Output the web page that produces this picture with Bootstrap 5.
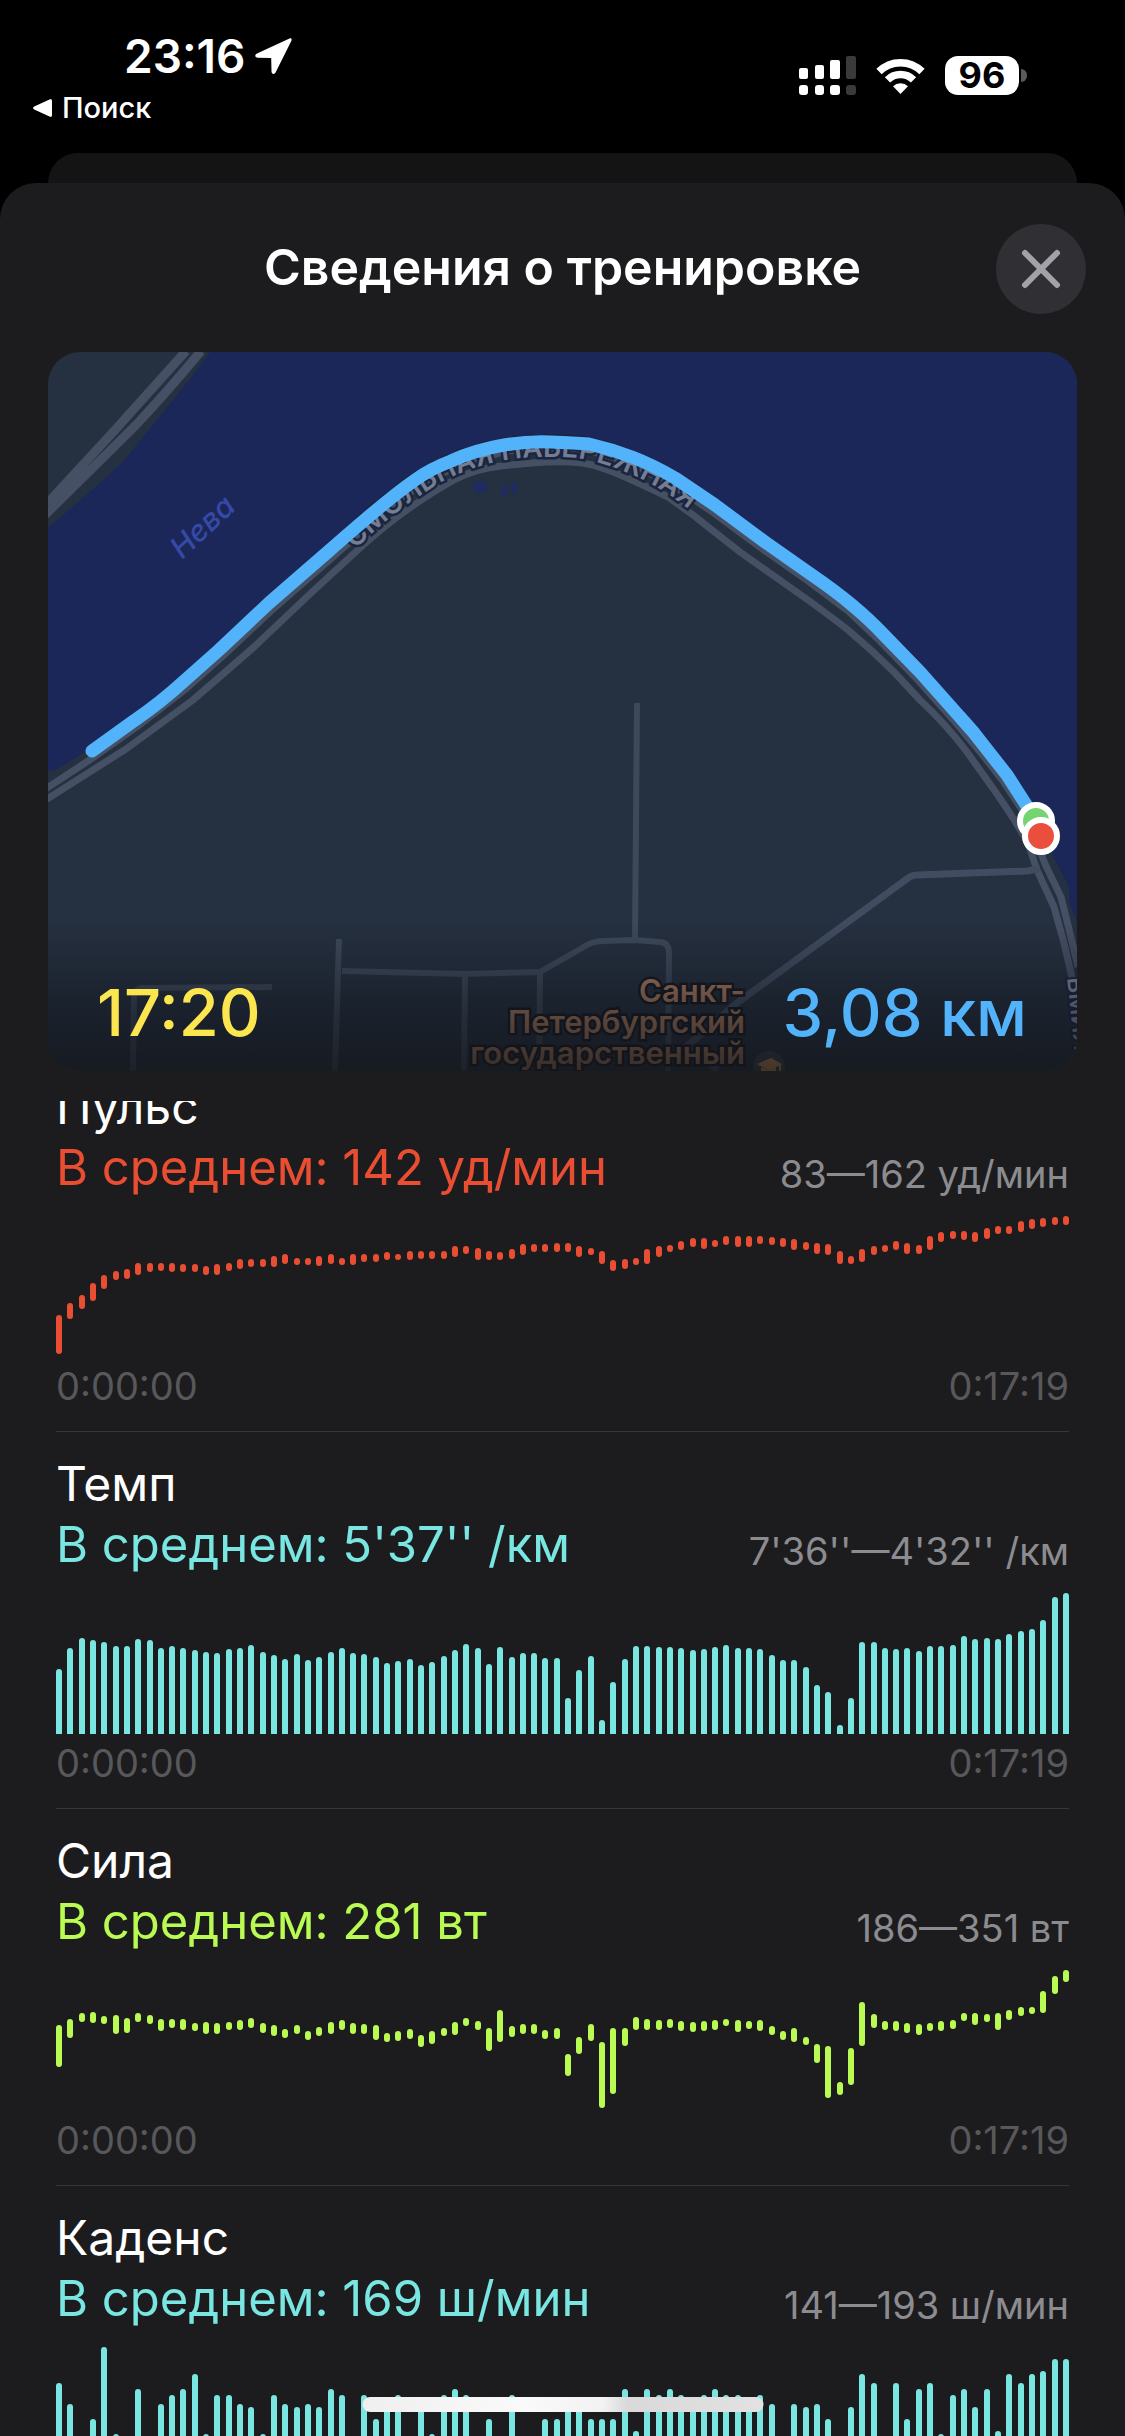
<!DOCTYPE html>
<html lang="ru" data-bs-theme="dark">
<head>
<meta charset="utf-8">
<meta name="viewport" content="width=device-width, initial-scale=1">
<title>Сведения о тренировке</title>
<link href="https://cdn.jsdelivr.net/npm/bootstrap@5.3.0/dist/css/bootstrap.min.css" rel="stylesheet">
<style>
  :root { --sheet: #1c1c1e; --red: #e94e33; --cyan: #79e6e1; --green: #b9fb52; --sky: #52b3fa; --yellow: #fbe650; }
  body { background: #000; color: #fff; font-family: Inter, "Liberation Sans", sans-serif; font-size: 48px; line-height: 60px; }
  .status-left { padding: 28px 0 0 33px; }
  .status-time { font-size: 46px; line-height: 56px; font-weight: 600; padding-left: 91px; gap: 10px; }
  .status-back { font-size: 29px; line-height: 36px; margin-top: 6px; gap: 10px; font-weight: 500; }
  .status-right { padding: 56px 98px 0 0; gap: 20px; height: 95px; }
  .status-area { height: 153px; }
  .battery-level { width: 74px; height: 39px; border-radius: 13px; font-size: 36px; line-height: 39px; font-weight: 700; }
  .battery-nub { width: 6px; height: 13px; border-radius: 0 6px 6px 0; background: #5a5a5a; margin-left: 2px; }
  .sheet-behind { height: 30px; margin: 0 48px; border-radius: 30px 30px 0 0; background: #141414; }
  .sheet { background: var(--sheet); border-radius: 36px 36px 0 0; min-height: 0; }
  .sheet-head { padding: 41px 39px 38px; }
  .head-side { width: 90px; height: 90px; }
  .close-btn { background: #303034; color: #a2a2a8; }
  .sheet-title { font-size: 50px; line-height: 60px; font-weight: 600; padding-bottom: 4px; }
  .map-box { margin: 0 48px 30px; height: 719px; border-radius: 32px; }
  .map-totals { padding: 0 50px 18px 49px; font-size: 65px; line-height: 80px; font-weight: 500; }
  .c-yellow { color: var(--yellow); } .c-sky { color: var(--sky); }
  .metrics { min-height: 0; scrollbar-width: none; }
  .metrics::-webkit-scrollbar { display: none; }
  .metric { margin: 0 56px; padding: 22px 0; border-bottom: 1px solid #37373a; }
  .metric h2 { font-size: 48px; line-height: 60px; font-weight: 400; }
  .m-avg { font-size: 49px; line-height: 61px; }
  .m-range { font-size: 38px; line-height: 48px; color: #8c8c90; }
  .m-plot { height: 141px; margin: 18px 0 6px; }
  .m-plot i { width: 6px; border-radius: 3px; background: currentColor; }
  .m-plot.solid i { border-radius: 3px 3px 0 0; }
  .m-time { font-size: 38px; line-height: 46px; color: #58585b; }
  .t-red { color: var(--red); } .t-cyan { color: var(--cyan); } .t-green { color: var(--green); }
  .home-bar { width: 401px; height: 15px; bottom: 24px; background: linear-gradient(90deg, #efefef, #fafafa 40%, #f2f2f2 60%, #d9d9d9 66%, #e2e2e2); }
</style>
<script src="https://cdn.jsdelivr.net/npm/bootstrap@5.3.0/dist/js/bootstrap.bundle.min.js"></script>
</head>
<body class="vh-100 overflow-hidden d-flex flex-column">

<header class="status-area flex-shrink-0 d-flex justify-content-between">
  <div class="status-left">
    <div class="status-time d-flex align-items-center">23:16
      <svg width="37" height="36" viewBox="0 0 37 36" fill="#fff" aria-hidden="true"><path d="M34.500 .5 2 15.500c-2.500 1.200-2.300 4 .8 4.200l13.400.3.300 13.400c.100 3 3 3.300 4.200.8L36.300 3c.9-2-.2-3.200-1.800-2.500z"/></svg>
    </div>
    <a href="#" class="status-back d-flex align-items-center text-white text-decoration-none">
      <svg width="19" height="18" viewBox="0 0 19 18" fill="#fff" aria-hidden="true"><path d="M1.200 7.600 16.500.4c1.400-.6 2.500 0 2.500 1.400v14.400c0 1.400-1.100 2-2.500 1.400L1.200 10.400c-1.600-.8-1.600-2 0-2.800z"/></svg>
      Поиск</a>
  </div>
  <div class="status-right d-flex align-items-center">
    <svg width="57" height="39" viewBox="0 0 57 39" fill="#fff" aria-label="Сигнал">
      <rect x="0" y="12" width="9" height="11" rx="2"/><rect x="16" y="9" width="9" height="14" rx="2"/><rect x="31" y="4" width="10" height="19" rx="2"/><rect x="47" y="0" width="10" height="23" rx="2" fill="#3a3a3a"/>
      <rect x="0" y="29" width="9" height="10" rx="3"/><rect x="16" y="29" width="9" height="10" rx="3"/><rect x="31" y="29" width="10" height="10" rx="3"/><rect x="47" y="29" width="10" height="10" rx="3" fill="#3a3a3a"/>
    </svg>
    <svg width="49" height="36" viewBox="0 0 49 36" aria-label="Wi-Fi">
      <g fill="none" stroke="#fff" stroke-width="7.500"><path d="M3 13.500a30.500 30.500 0 0 1 43 0"/><path d="M11.500 21.800a18.500 18.500 0 0 1 26 0"/></g>
      <path fill="#fff" d="M24.500 36 17 28.300a10.800 10.800 0 0 1 15 0z"/>
    </svg>
    <div class="d-flex align-items-center"><div class="battery-level bg-white text-black text-center">96</div><div class="battery-nub"></div></div>
  </div>
</header>

<div class="sheet-behind flex-shrink-0"></div>

<main class="sheet flex-fill d-flex flex-column">
  <div class="sheet-head d-flex align-items-center">
    <div class="head-side"></div>
    <h1 class="sheet-title flex-fill text-center mb-0">Сведения о тренировке</h1>
    <button type="button" class="head-side close-btn border-0 rounded-circle p-0 d-flex align-items-center justify-content-center" aria-label="Закрыть">
      <svg width="40" height="40" viewBox="0 0 40 40" fill="none" stroke="currentColor" stroke-width="6" stroke-linecap="round"><path d="M4 4l32 32M36 4 4 36"/></svg>
    </button>
  </div>

  <section class="map-box position-relative overflow-hidden flex-shrink-0">
    <svg class="d-block w-100 h-100" viewBox="48 352 1029 719" preserveAspectRatio="xMidYMid slice" font-family="Inter, sans-serif" aria-label="Карта маршрута">
      <defs>
        <linearGradient id="fade" x1="0" y1="0" x2="0" y2="1"><stop offset="0" stop-color="#0e1014" stop-opacity="0"/><stop offset=".55" stop-color="#0e1118" stop-opacity=".45"/><stop offset="1" stop-color="#121317" stop-opacity=".75"/></linearGradient>
        <path id="quay" d="M352 552C372 533 392 515 411 502S440 482 454 476 485 464 501 461 530 457 547 457 570 457 582 459 608 465 625 472 652 484 668 494L740 547"/>
      </defs>
      <rect x="48" y="352" width="1029" height="719" fill="#253040"/>
      <path fill="#1c2759" d="M210 352 197 370 161 415 120 465 61 517 48 528V771L56 770 83 753 135 720 183 682 219 650 269 603 308 570 347 540 379 507 415 480 451 461 504 445 551 442 589 444 632 457 675 478 715 505 765 542 812 575 852 605 884 635 920 672 960 717 985 747 1007 775 1050 850 1069 887 1069 900 1077 923V352z"/>
      <g fill="none" stroke="#465065" stroke-linejoin="round">
        <path stroke-width="9" d="M186 351 115 430 44 507M201 351Q166 393 136 425L44 516"/>
        <path stroke-width="7" d="M44 801 126 749 193 700 208 687 254 647 311 593 361 547Q388 523 411 507T454 480 501 466 547 462 582 463 625 477 668 497L693 515 740 552 791 588Q824 611 848 630 872 650 895 673L920 700Q946 724 967 752L992 787Q1014 818 1028 843L1037 870 1054 907 1064 943 1073 982"/>
        <path stroke-width="7" d="M44 790 94 757 138 726 187 688 223 656 273 609 334 556C364 530 389 507 419 486L455 467 506 451 551 448 587 450 629 463 671 484 711 511 761 548 808 581 848 611 880 641 916 678 956 723 981 753 1003 781 1024 813 1046 866 1061 897 1070 933 1078 967"/>
        <path stroke-width="6" stroke="#3d495b" d="M637 703 635 938M342 971 465 974 540 972 582 948Q592 941 603 941L635 940 660 942Q669 943 669 953L668 1071M339 939 335 1071M465 977 464 1071M540 973 539 1071M133 1071 134 997Q135 988 143 988L272 987"/>
        <path stroke-width="7" stroke="#414c60" d="M1040 868 1028 871 917 875Q911 875 904 881L737 1003 686 1047 718 1070"/>
      </g>
      <path fill="#1f2b62" d="M472 483l13-2 2 10-10 3zM502 486l6-3-2 13-5 1zM511 485l5-3 1 11-5 1z"/>
      <text font-size="30" font-weight="500" font-style="italic" fill="#3649a6" transform="translate(182 560) rotate(-43)">Нева</text>
      <text font-size="28" font-weight="600" fill="#747d92" stroke="#1b2540" stroke-width="5" paint-order="stroke"><textPath href="#quay" startOffset="4">СМОЛЬНАЯ НАБЕРЕЖНАЯ</textPath></text>
      <path fill="none" stroke="#52b3fa" stroke-width="13" stroke-linecap="round" stroke-linejoin="round" d="M92 751 135 720Q160 703 183 682L219 650 269 603 330 550C360 524 385 501 415 480Q430 469 451 461 475 450 504 445 528 441 551 442T589 444Q611 449 632 457T675 478L715 505 765 542 812 575Q834 590 852 605T884 635L920 672 960 717Q974 732 985 747L1007 775 1032 814"/>
      <g stroke="#fff" stroke-width="6"><circle cx="1036" cy="821" r="16" fill="#75d472"/><circle cx="1041" cy="836" r="16" fill="#ea4e3c"/></g>
      <g font-size="31" font-weight="600" text-anchor="end" fill="#ab7d62" stroke="#15181f" stroke-width="5" paint-order="stroke">
        <text x="745" y="1002">Санкт-</text><text x="745" y="1033">Петербургский</text><text x="745" y="1064">государственный</text>
      </g>
      <circle cx="769" cy="1067" r="16" fill="#36474c"/><path fill="#d0965c" d="M757 1064l14-6 11 6-13 7zM761 1067v6h15v-6l-7 4zM779 1065h2v7h-2z"/>
      <text font-size="24" font-weight="600" fill="#848da2" stroke="#1b2540" stroke-width="4" paint-order="stroke" transform="translate(1067 978) rotate(84)">ВМИЛ</text>
      <rect x="48" y="922" width="1029" height="149" fill="url(#fade)"/>
    </svg>
    <div class="map-totals position-absolute bottom-0 start-0 end-0 d-flex justify-content-between"><span class="c-yellow">17:20</span><span class="c-sky">3,08 км</span></div>
  </section>

  <div class="metrics flex-fill overflow-auto" id="metrics">
    <section class="metric">
      <h2 class="mb-0">Пульс</h2>
      <div class="d-flex justify-content-between align-items-end"><span class="m-avg t-red">В среднем: 142 уд/мин</span><span class="m-range">83—162 уд/мин</span></div>
      <div class="m-plot t-red d-flex justify-content-between align-items-end" data-series="pulse"></div>
      <div class="m-time d-flex justify-content-between"><span>0:00:00</span><span>0:17:19</span></div>
    </section>
    <section class="metric">
      <h2 class="mb-0">Темп</h2>
      <div class="d-flex justify-content-between align-items-end"><span class="m-avg t-cyan">В среднем: 5'37'' /км</span><span class="m-range">7'36''—4'32'' /км</span></div>
      <div class="m-plot solid t-cyan d-flex justify-content-between align-items-end" data-series="pace"></div>
      <div class="m-time d-flex justify-content-between"><span>0:00:00</span><span>0:17:19</span></div>
    </section>
    <section class="metric">
      <h2 class="mb-0">Сила</h2>
      <div class="d-flex justify-content-between align-items-end"><span class="m-avg t-green">В среднем: 281 вт</span><span class="m-range">186—351 вт</span></div>
      <div class="m-plot t-green d-flex justify-content-between align-items-end" data-series="power"></div>
      <div class="m-time d-flex justify-content-between"><span>0:00:00</span><span>0:17:19</span></div>
    </section>
    <section class="metric">
      <h2 class="mb-0">Каденс</h2>
      <div class="d-flex justify-content-between align-items-end"><span class="m-avg t-cyan">В среднем: 169 ш/мин</span><span class="m-range">141—193 ш/мин</span></div>
      <div class="m-plot solid t-cyan d-flex justify-content-between align-items-end" data-series="cadence"></div>
      <div class="m-time d-flex justify-content-between"><span>0:00:00</span><span>0:17:19</span></div>
    </section>
  </div>
</main>

<div class="home-bar position-fixed start-50 translate-middle-x rounded-pill"></div>

<script>
  // Each series: level of the plot's floor, then one sample per bar.
  // A sample is "top" (bar stands on the floor) or "top-bottom" (floating bar).
  // Levels grow downwards, three per CSS pixel.
  const series = {
    pulse: [501, "375-493 339-387 314-357 279-332 254-297 243-271 238-267 218-255 218-246 218-242 218-246 223-246 223-246 228-256 223-256 218-242 208-237 208-231 208-231 198-231 193-222 204-226 204-226 198-227 193-222 204-226 193-226 193-217 193-216 188-211 193-211 183-210 183-207 183-207 183-207 168-201 168-192 173-210 183-210 188-211 178-207 163-196 163-187 163-187 158-186 158-186 168-201 173-195 183-222 208-242 208-237 204-226 178-222 168-201 164-186 153-181 143-171 143-176 149-171 138-166 138-171 138-171 138-162 143-166 143-171 149-181 158-181 158-192 164-196 183-222 198-222 178-216 168-195 164-186 153-181 158-192 164-192 138-181 128-157 123-147 123-151 128-157 113-147 108-131 108-131 93-126 88-117 83-111 83-106 78-105"],
    pace: [522, "327 265 234 239 245 259 258 237 241 264 259 264 269 276 278 266 264 256 275 285 296 281 301 290 276 265 279 281 291 309 303 297 315 305 287 271 252 263 313 261 290 279 279 294 294 414 330 288 480 367 296 258 258 261 260 264 270 267 261 255 265 264 268 285 301 300 322 375 396 495 413 245 246 263 267 265 274 259 258 255 228 237 234 237 222 212 208 180 112 99"],
    power: [483, "225-351 207-263 189-217 186-220 198-223 196-253 204-249 189-215 195-222 206-242 209-235 208-241 218-243 216-251 219-253 216-241 210-241 204-234 219-249 225-258 239-265 225-251 243-270 231-258 216-253 210-241 221-253 222-253 225-270 249-275 242-273 236-267 254-290 242-282 234-259 216-255 204-229 213-239 234-303 180-277 228-261 223-253 223-253 239-267 234-267 312-378 259-311 222-273 276-474 234-431 234-287 201-239 206-239 208-239 208-234 213-243 216-246 213-243 208-239 208-229 210-246 213-238 210-243 228-255 242-270 235-276 260-285 282-339 288-445 396-435 295-405 156-289 192-235 213-239 213-243 219-249 223-255 219-243 213-243 210-237 189-213 189-225 192-216 189-239 180-210 170-198 170-192 125-190 79-132 60-97"],
    cadence: [864, "549 612 747 657 441 702 747 567 747 612 585 567 522 702 585 585 612 621 702 585 612 621 612 621 567 585 747 585 657 612 585 747 612 702 585 567 585 747 657 747 585 747 747 657 657 621 612 657 657 657 567 693 567 585 567 585 612 585 567 585 585 612 585 612 747 612 621 612 657 747 621 522 549 747 549 657 567 549 702 585 567 621 567 693 522 549 522 513 477 477"]
  };
  document.querySelectorAll("[data-series]").forEach(plot => {
    const [floor, samples] = series[plot.dataset.series];
    plot.innerHTML = samples.split(" ").map(s => {
      const [top, bottom = floor] = s.split("-").map(Number);
      const height = Math.round((bottom - top) / 3), lift = Math.round((floor - bottom) / 3);
      return `<i style="height:${height}px;margin-bottom:${lift}px"></i>`;
    }).join("");
  });
  // The list opens slightly scrolled under the map.
  document.getElementById("metrics").scrollTop = 46;
</script>
</body>
</html>
